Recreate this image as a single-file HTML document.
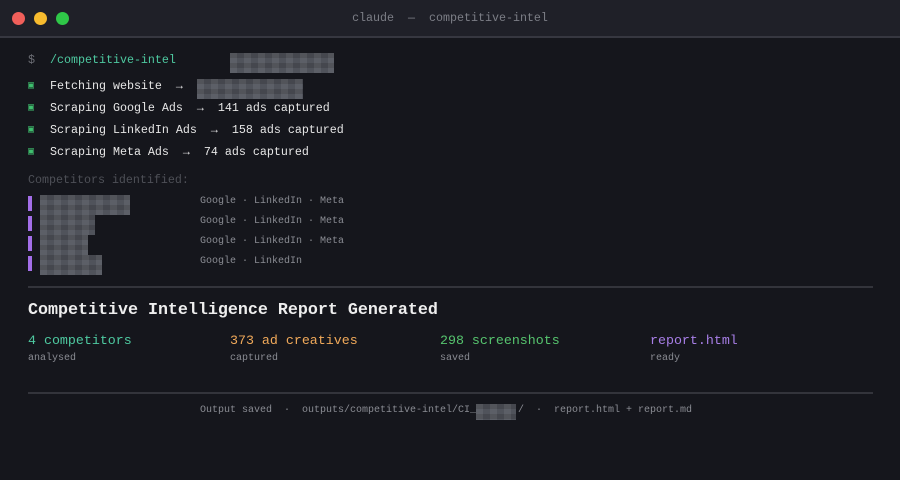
<!DOCTYPE html>
<html><head><style>
*{margin:0;padding:0;box-sizing:border-box}
body{width:900px;height:480px;background:#15161c;font-family:"Liberation Mono","DejaVu Sans Mono",monospace;color:#e6e6e6;position:relative;overflow:hidden}
.hdr{position:absolute;left:0;top:0;width:900px;height:38px;background:#1f2028;border-bottom:2px solid #363740}
.dot{position:absolute;top:12px;width:13px;height:13px;border-radius:50%}
.t{position:absolute;white-space:pre}
.m{font-size:11.67px}
.s{font-size:10px;color:#8a8c93}
.g{color:#4ec9a0}
.px{position:absolute;background:#50535b;background-image:linear-gradient(90deg,rgba(255,255,255,.07) 50%,transparent 50%),linear-gradient(rgba(0,0,0,.14) 50%,transparent 50%);background-size:14px 14px,14px 10px}
.bar{position:absolute;left:28px;width:4px;height:15px;background:#a36ee8}
.hr{position:absolute;left:28px;width:845px;height:2px;background:#33343b}
.chk{color:#3fbf6e;font-size:10px}
</style></head><body>
<div class="hdr">
<div class="dot" style="left:12px;background:#f05f5a"></div>
<div class="dot" style="left:34px;background:#f7bb2e"></div>
<div class="dot" style="left:56px;background:#2fc748"></div>
<div class="t" style="left:0;width:900px;text-align:center;top:11px;font-size:11.67px;color:#7c7e86">claude  —  competitive-intel</div>
</div>

<div class="t m" style="left:28px;top:53px;color:#6c6e75">$</div>
<div class="t m g" style="left:50px;top:53px">/competitive-intel</div>
<div class="px" style="left:230px;top:53px;width:104px;height:20px"></div>

<div class="t chk" style="left:28px;top:80px">▣</div>
<div class="t m" style="left:50px;top:79px">Fetching website  →</div>
<div class="px" style="left:197px;top:79px;width:106px;height:20px"></div>
<div class="t chk" style="left:28px;top:102px">▣</div>
<div class="t m" style="left:50px;top:101px">Scraping Google Ads  →  141 ads captured</div>
<div class="t chk" style="left:28px;top:124px">▣</div>
<div class="t m" style="left:50px;top:123px">Scraping LinkedIn Ads  →  158 ads captured</div>
<div class="t chk" style="left:28px;top:146px">▣</div>
<div class="t m" style="left:50px;top:145px">Scraping Meta Ads  →  74 ads captured</div>

<div class="t m" style="left:28px;top:173px;color:#4e5057">Competitors identified:</div>

<div class="bar" style="top:196px"></div><div class="px" style="left:40px;top:195px;width:90px;height:20px"></div>
<div class="t s" style="left:200px;top:196px">Google · LinkedIn · Meta</div>
<div class="bar" style="top:216px"></div><div class="px" style="left:40px;top:215px;width:55px;height:20px"></div>
<div class="t s" style="left:200px;top:216px">Google · LinkedIn · Meta</div>
<div class="bar" style="top:236px"></div><div class="px" style="left:40px;top:235px;width:48px;height:20px"></div>
<div class="t s" style="left:200px;top:236px">Google · LinkedIn · Meta</div>
<div class="bar" style="top:256px"></div><div class="px" style="left:40px;top:255px;width:62px;height:20px"></div>
<div class="t s" style="left:200px;top:256px">Google · LinkedIn</div>

<div class="hr" style="top:286px"></div>
<div class="t" style="left:28px;top:301px;font-size:16.67px;font-weight:bold;color:#eeeeee">Competitive Intelligence Report Generated</div>

<div class="t" style="left:28px;top:333px;font-size:13.3px;color:#4ec9a0">4 competitors</div>
<div class="t s" style="left:28px;top:353px">analysed</div>
<div class="t" style="left:230px;top:333px;font-size:13.3px;color:#f0a95a">373 ad creatives</div>
<div class="t s" style="left:230px;top:353px">captured</div>
<div class="t" style="left:440px;top:333px;font-size:13.3px;color:#56c46e">298 screenshots</div>
<div class="t s" style="left:440px;top:353px">saved</div>
<div class="t" style="left:650px;top:333px;font-size:13.3px;color:#a77ee6">report.html</div>
<div class="t s" style="left:650px;top:353px">ready</div>

<div class="hr" style="top:392px"></div>
<div class="t s" style="left:200px;top:405px">Output saved  ·  outputs/competitive-intel/CI_</div>
<div class="px" style="left:476px;top:404px;width:40px;height:16px"></div>
<div class="t s" style="left:518px;top:405px">/  ·  report.html + report.md</div>
</body></html>
